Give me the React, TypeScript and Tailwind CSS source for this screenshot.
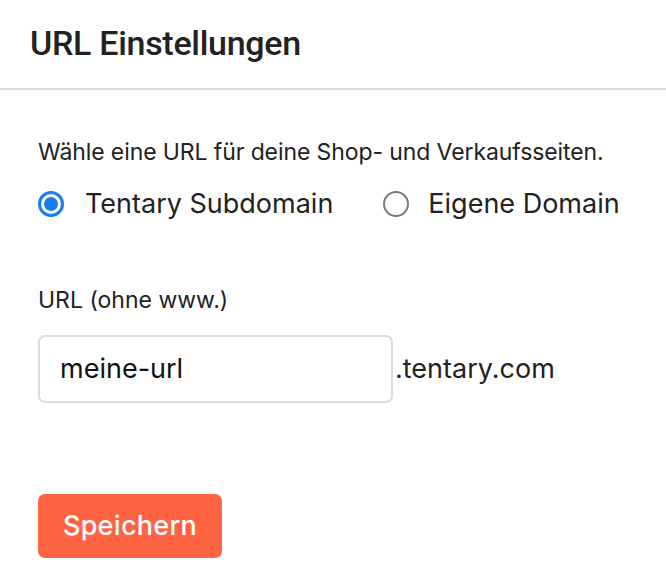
export default function App() {
  return (
    <div className="w-[666px] h-[588px] bg-white overflow-hidden" style={{ fontFamily: '"Inter", "Liberation Sans", sans-serif' }}>
      <div className="h-[90px] flex items-center px-[30px] border-b-2 border-[#dadada]">
        <h1 className="text-[34px] font-medium text-[#222222] font-['Roboto',sans-serif] tracking-[-0.3px] pb-[2px]">
          URL Einstellungen
        </h1>
      </div>

      <div className="px-[38px] pt-[47px]">
        <p className="text-[23px] leading-[30px] text-[#222222] tracking-[-0.1px]">
          Wähle eine URL für deine Shop- und Verkaufsseiten.
        </p>

        <div className="mt-[21px] flex items-center">
          <label className="flex items-center">
            <span className="w-[26px] h-[26px] rounded-full border-[3px] border-[#1a7cf5] flex items-center justify-center">
              <span className="w-[14px] h-[14px] rounded-full bg-[#1a7cf5]" />
            </span>
            <span className="ml-[21px] text-[27px] leading-[32px] text-[#222222]">Tentary Subdomain</span>
          </label>
          <label className="flex items-center ml-[50px]">
            <span className="w-[26px] h-[26px] rounded-full border-2 border-[#7a7a7a]" />
            <span className="ml-[19px] text-[27px] leading-[32px] text-[#222222]">Eigene Domain</span>
          </label>
        </div>

        <p className="mt-[65px] text-[23px] leading-[30px] text-[#222222]">URL (ohne www.)</p>

        <div className="mt-[20px] flex items-center">
          <div className="w-[355px] h-[68px] rounded-[7px] border-2 border-[#dcdcdc] flex items-center px-[20px]">
            <span className="text-[27px] text-[#111111]">meine-url</span>
          </div>
          <span className="ml-[2px] text-[27px] text-[#222222]">.tentary.com</span>
        </div>

        <button className="mt-[91px] w-[184px] h-[64px] rounded-[7px] bg-[#ff6341] text-white text-[27px] font-medium tracking-[0.3px]">
          Speichern
        </button>
      </div>
    </div>
  );
}
